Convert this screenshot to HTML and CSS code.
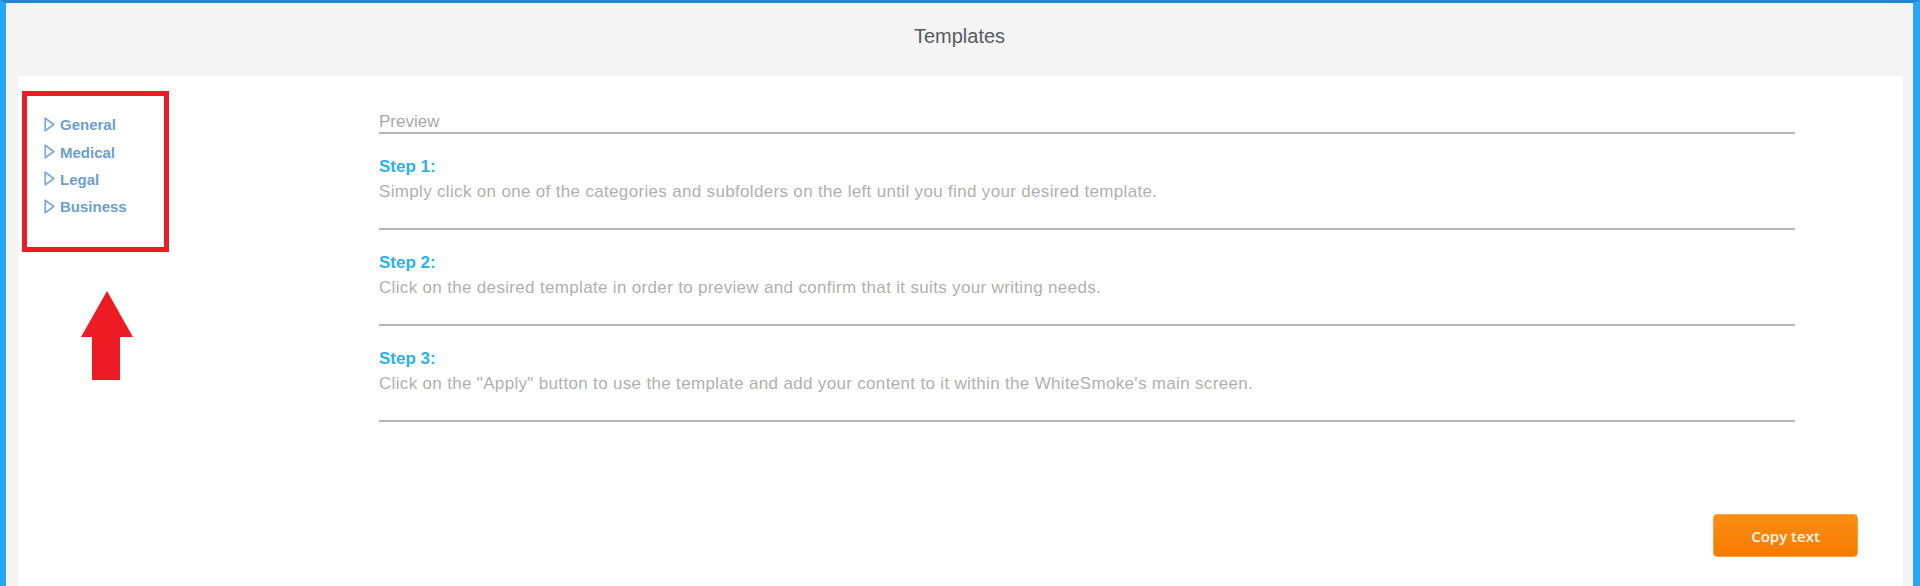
FILE: index.html
```html
<!DOCTYPE html>
<html lang="en">
<head>
    <meta charset="UTF-8">
    <meta name="viewport" content="width=device-width, initial-scale=1.0">
    <title>Templates</title>
    <link rel="stylesheet" href="styles.css">
</head>
<body>
    <div class="window">
        <div class="header">Templates</div>

        <div class="panel">
            <div class="panel-body">
                <ul class="categories">
                    <li><svg class="tri" width="11" height="15" viewBox="0 0 11 15"><polygon points="1.2,1.2 9.8,7.5 1.2,13.8"/></svg>General</li>
                    <li><svg class="tri" width="11" height="15" viewBox="0 0 11 15"><polygon points="1.2,1.2 9.8,7.5 1.2,13.8"/></svg>Medical</li>
                    <li><svg class="tri" width="11" height="15" viewBox="0 0 11 15"><polygon points="1.2,1.2 9.8,7.5 1.2,13.8"/></svg>Legal</li>
                    <li><svg class="tri" width="11" height="15" viewBox="0 0 11 15"><polygon points="1.2,1.2 9.8,7.5 1.2,13.8"/></svg>Business</li>
                </ul>

                <div class="preview">
                    <div class="preview-title">Preview</div>

                    <div class="step">
                        <div class="step-title">Step 1:</div>
                        <div class="step-text">Simply click on one of the categories and subfolders on the left until you find your desired template.</div>
                    </div>
                    <div class="step">
                        <div class="step-title">Step 2:</div>
                        <div class="step-text">Click on the desired template in order to preview and confirm that it suits your writing needs.</div>
                    </div>
                    <div class="step">
                        <div class="step-title">Step 3:</div>
                        <div class="step-text">Click on the "Apply" button to use the template and add your content to it within the WhiteSmoke's main screen.</div>
                    </div>
                </div>
            </div>

            <div class="panel-footer">
                <button class="copy-btn" type="button">Copy text</button>
            </div>

            <!-- annotation overlay -->
            <div class="mark-box"></div>
            <svg class="mark-arrow" width="54" height="92" viewBox="0 0 54 92">
                <polygon points="26,0 52,46 39,46 39,89 11,89 11,46 0,46"/>
            </svg>
        </div>
    </div>
</body>
</html>
```

FILE: styles.css
```css
html, body {
    margin: 0;
    padding: 0;
}
body {
    font-family: "Liberation Sans", Arial, sans-serif;
    background-color: #f4f4f4;
}
.window {
    height: 586px;
    box-sizing: border-box;
    border-left: 6px solid #27a6f4;
    border-right: 7px solid #27a6f4;
    border-top: 3px solid #2387cf;
    background-color: #f4f4f4;
    display: flex;
    flex-direction: column;
    overflow: hidden;
}
.header {
    height: 73px;
    box-sizing: border-box;
    padding-top: 21px;
    text-align: center;
    font-size: 20px;
    line-height: 24px;
    color: #565b62;
}
.panel {
    position: relative;
    flex: 1;
    margin: 0 10px 0 13px;
    background-color: #fff;
    box-shadow: -1px 0 0 #f9fbff;
}
.panel-body {
    display: flex;
}
.categories {
    list-style: none;
    margin: 0;
    padding: 35px 0 0 25px;
    width: 335px;
}
.categories li {
    display: flex;
    align-items: center;
    height: 27.4px;
    font-size: 15px;
    font-weight: bold;
    color: #6c9fcc;
}
.tri {
    margin-right: 5px;
    margin-top: -1px;
}
.tri polygon {
    fill: none;
    stroke: #7eabd6;
    stroke-width: 1.7;
    stroke-linejoin: round;
}
.preview {
    width: 1416px;
    padding-top: 36px;
}
.preview-title {
    font-size: 17px;
    line-height: 20px;
    color: #a8a8a8;
    border-bottom: 2px solid #b6b6b6;
}
.step {
    padding: 20px 0 24px;
    border-bottom: 2px solid #b6b6b6;
}
.step-title {
    font-size: 17px;
    font-weight: bold;
    line-height: 25px;
    color: #2ab4e6;
}
.step-text {
    font-size: 17px;
    line-height: 25px;
    letter-spacing: 0.33px;
    color: #b0b0b0;
}
.panel-footer {
    display: flex;
    justify-content: flex-end;
    padding: 92px 45px 0 0;
}
.copy-btn {
    width: 145px;
    height: 43px;
    border: 1px solid #f7a04a;
    border-radius: 4px;
    background: linear-gradient(#fb8e14, #f67a00);
    color: #fff8ec;
    font-family: "Open Sans", "Noto Sans", sans-serif;
    font-size: 15px;
    font-weight: 600;
    cursor: pointer;
}
.mark-box {
    position: absolute;
    left: 3px;
    top: 15px;
    width: 137px;
    height: 151px;
    border: 5px solid #ed1c24;
}
.mark-arrow {
    position: absolute;
    left: 62px;
    top: 215px;
}
.mark-arrow polygon {
    fill: #ed1c24;
}
```
